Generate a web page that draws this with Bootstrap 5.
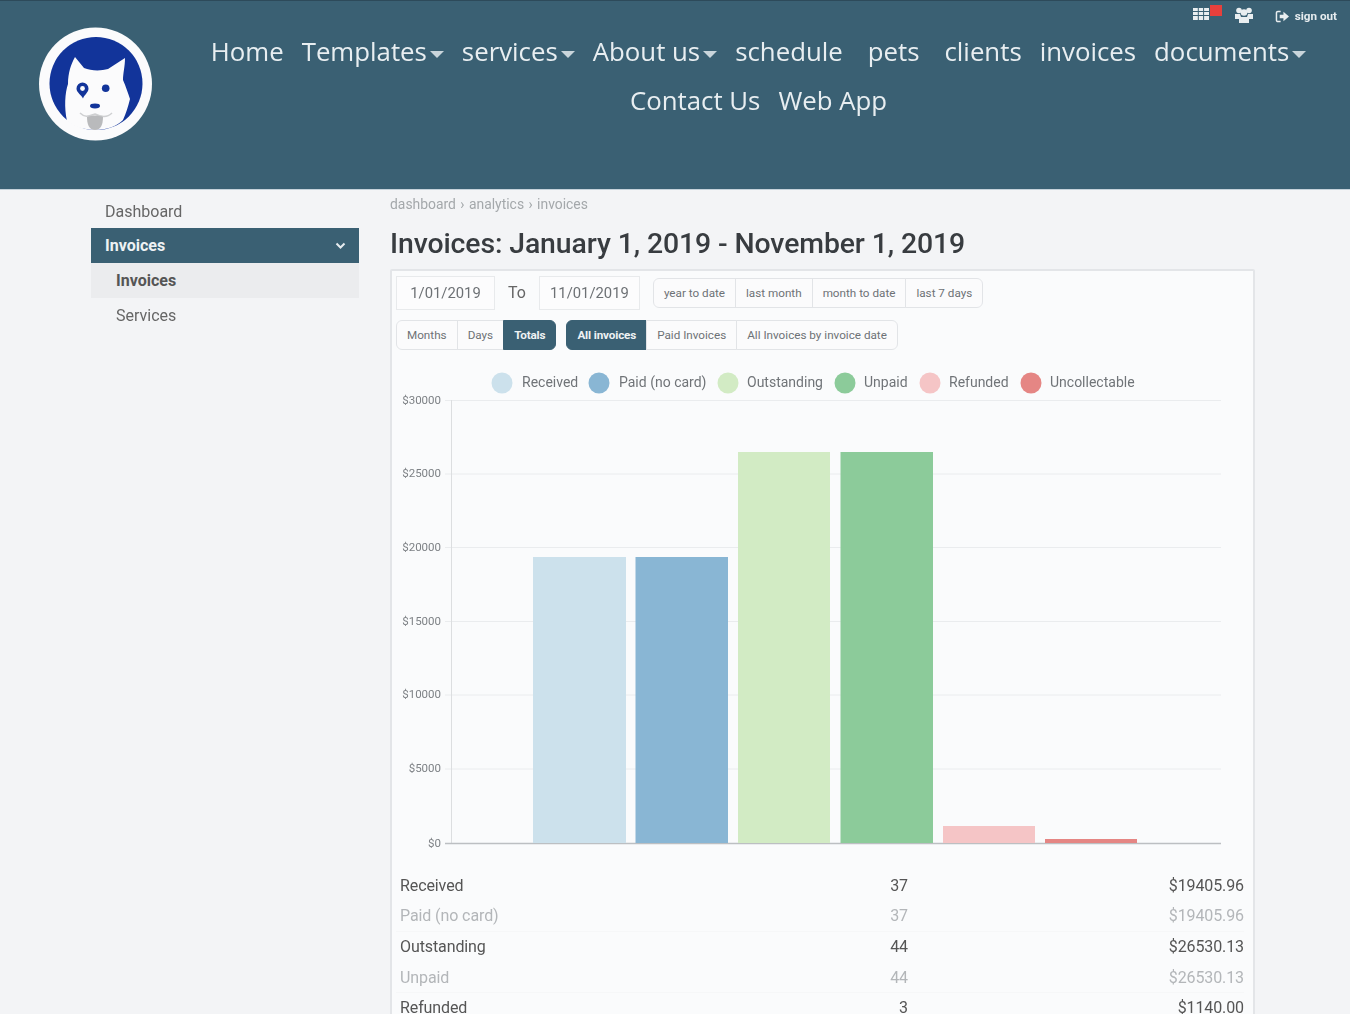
<!DOCTYPE html>
<html lang="en">
<head>
<meta charset="utf-8">
<title>Invoices</title>
<link href="https://cdn.jsdelivr.net/npm/bootstrap@5.3.0/dist/css/bootstrap.min.css" rel="stylesheet">
<style>
html,body{height:1014px;overflow:hidden}
body{background:#f3f4f6;font-family:Roboto,"Liberation Sans",sans-serif;color:#444;filter:blur(.5px)}
.top-head{background:#3a6073;height:190px;border-bottom:1px solid #c5d2da;border-top:1px solid #2d4a5a;padding:0 13px 0 39px}
.logo-wrap{width:114px;height:114px;margin-top:26px;flex:none}
.nav-area{flex:1;min-width:0;padding-left:52px}
.util-row{height:26px;font-size:11.7px;font-weight:700;color:#e6ecef;padding-top:4px}
.util-users{margin:2px 0 0 13px}
.util-out{margin:3px 0 0 22px;gap:5px}
.main-nav{width:1131px;margin-left:-12px;justify-content:center;row-gap:0}
.main-nav .nav-link{font-family:"Open Sans","Noto Sans",sans-serif;font-size:25.8px;line-height:49px;color:#e8eef1;padding:0 9px}
.main-nav .gap-l{margin-left:7px}
.caret-down{display:inline-block;width:0;height:0;border-left:7.5px solid transparent;border-right:7.5px solid transparent;border-top:7px solid #c9d5db;margin-left:3px;vertical-align:middle}
.page-body{padding-left:91px;gap:31px}
.side-col{width:268px;flex:none;font-size:16px}
.side-col .list-group-item{background:transparent;border:0;border-radius:0;padding:0 14px;height:35px;line-height:35px;color:#666}
.side-col .list-group-item.side-first{height:38px;line-height:43px}
.side-col .list-group-item.side-open{background:#3a6073;color:#eef2f4;font-weight:700;display:flex;justify-content:space-between;align-items:center;padding-right:13px}
.side-col .list-group-item.side-sub{padding-left:25px}
.side-col .list-group-item.side-cur{background:#ebecee;font-weight:700;color:#555}
.main-col{width:865px;flex:none}
.crumb-row{font-size:13.9px;color:#a4a8ab;height:28px;line-height:28px;word-spacing:1px}
.page-title{font-size:28.4px;font-weight:500;color:#383c40;margin:0;line-height:40px;height:51px;padding-top:6px;letter-spacing:-.1px}
.panel-box{background:#fafbfc;border:2px solid #e3e5e8;border-radius:2px;height:900px;padding:5px 9px 0 4px}
.date-row{gap:13px;height:34px;align-items:center}
.date-field{width:99px;height:34px;border:1px solid #e8eaec;background:#fcfcfd;text-align:center;font-size:14.8px;color:#6d7175;border-radius:0;padding:0}
.date-field-b{width:101px}
.to-word{font-size:16px;color:#666}
.chip-group .btn{background:#fbfbfc;border-color:#e2e4e7;color:#6e7276;font-size:11.7px;padding:0 10px;height:30px;line-height:28px;white-space:nowrap}
.chip-group .btn.chip-on{background:#3a6073;border-color:#3a6073;color:#eef2f4;font-weight:700;letter-spacing:-.15px}
.chip-row{gap:10px;margin-top:10px}
.chart-svg{display:block;margin-top:8px;margin-left:-4px}
.chart-svg text{font-family:Roboto,"Liberation Sans",sans-serif}
.tot-table{font-size:16px;letter-spacing:-.1px}
.tot-row{display:grid;grid-template-columns:1fr 60px 336px;height:30.7px;line-height:30.7px;padding-left:4px;color:#555}
.tot-row>div:nth-child(n+2){text-align:right}
.tot-row.tot-dim{color:#b3b6b9;border-bottom:1px solid #f6f7f8}
</style>
</head>
<body>
<header class="top-head d-flex">
  <div class="logo-wrap">
    <svg width="114" height="114" viewBox="0 0 114 114" role="img" aria-label="Logo">
      <circle cx="56.500" cy="57" r="56.500" fill="#fbfbfc"/>
      <circle cx="57" cy="56.500" r="46.500" fill="#12349a"/>
      <path d="M28 94 C25 80 26 66 29 57 C29 46 32 37 36 30 L45 41 C52 44 62 44 69 42 L86 31 C86 40 84 46 84 53 C87 60 89 66 91 72 C89 80 87 86 84 93 C72 106 42 106 28 94 Z" fill="#fbfbfc"/>
      <path d="M37.500 61.500 a6 6 0 1 1 12 0 c0 4 -4 6 -5.500 10 c-2 -4 -6.500 -6 -6.500 -10 Z" fill="#12349a"/>
      <circle cx="43.500" cy="61.500" r="2.400" fill="#fbfbfc"/>
      <circle cx="66.700" cy="61.300" r="3.800" fill="#12349a"/>
      <ellipse cx="56" cy="79" rx="5" ry="2.400" fill="#12349a"/>
      <path d="M41 86 C46 91 50 89 56 87 C62 90 68 91 73 86" fill="none" stroke="#cfd0d2" stroke-width="1.500"/>
      <path d="M48 90 C53 88 59 88 64 90 C64 97 62 103 56 103 C50 103 48 97 48 90 Z" fill="#b9babc"/>
    </svg>
  </div>
  <div class="nav-area">
    <div class="util-row d-flex justify-content-end align-items-start">
      <svg width="29" height="16" viewBox="0 0 29 16" aria-hidden="true"><path d="M0 3h16v12H0z" fill="#e9eef0"/><path d="M0 6.500h16M0 10.500h16M5.300 3v12M10.600 3v12" stroke="#3a6073"/><rect x="17" y="0" width="12" height="11" fill="#e7403c"/></svg>
      <svg class="util-users" width="18" height="16" viewBox="0 0 18 16" aria-hidden="true"><circle cx="4" cy="3.500" r="2.800" fill="#e9eef0"/><circle cx="14" cy="3.500" r="2.800" fill="#e9eef0"/><circle cx="9" cy="5.500" r="3.300" fill="#e9eef0"/><path d="M0 7h5l1 3h6l1-3h5v5h-4v4H4v-4H0z" fill="#e9eef0"/></svg>
      <span class="d-flex align-items-center util-out"><svg width="15" height="13" viewBox="0 0 16 14" aria-hidden="true"><path d="M6 1.500H3A1.500 1.500 0 0 0 1.500 3v8A1.500 1.500 0 0 0 3 12.500h3" fill="none" stroke="#e9eef0" stroke-width="1.600"/><path d="M5 5h4V2l6 5-6 5V9H5z" fill="#e9eef0"/></svg>sign out</span>
    </div>
    <nav class="nav main-nav">
      <a class="nav-link" href="#">Home</a>
      <a class="nav-link" href="#">Templates<span class="caret-down"></span></a>
      <a class="nav-link" href="#">services<span class="caret-down"></span></a>
      <a class="nav-link" href="#">About us<span class="caret-down"></span></a>
      <a class="nav-link" href="#">schedule</a>
      <a class="nav-link gap-l" href="#">pets</a>
      <a class="nav-link gap-l" href="#">clients</a>
      <a class="nav-link" href="#">invoices</a>
      <a class="nav-link" href="#">documents<span class="caret-down"></span></a>
      <a class="nav-link" href="#">Contact Us</a>
      <a class="nav-link" href="#">Web App</a>
    </nav>
  </div>
</header>
<div class="page-body d-flex">
  <aside class="side-col list-group">
    <a class="list-group-item side-first" href="#">Dashboard</a>
    <a class="list-group-item side-open" href="#">Invoices
      <svg width="11" height="8" viewBox="0 0 11 8" aria-hidden="true"><path d="M1.500 1.500l4 4 4-4" fill="none" stroke="#e6ecef" stroke-width="2"/></svg></a>
    <a class="list-group-item side-sub side-cur" href="#">Invoices</a>
    <a class="list-group-item side-sub" href="#">Services</a>
  </aside>
  <main class="main-col">
    <div class="crumb-row">dashboard › analytics › invoices</div>
    <h1 class="page-title">Invoices: January 1, 2019 - November 1, 2019</h1>
    <section class="panel-box">
      <div class="d-flex date-row">
        <input class="form-control date-field" value="1/01/2019" aria-label="From">
        <span class="to-word">To</span>
        <input class="form-control date-field date-field-b" value="11/01/2019" aria-label="To">
        <div class="btn-group chip-group">
          <a class="btn" href="#">year to date</a><a class="btn" href="#">last month</a><a class="btn" href="#">month to date</a><a class="btn" href="#">last 7 days</a>
        </div>
      </div>
      <div class="d-flex chip-row">
        <div class="btn-group chip-group">
          <a class="btn" href="#">Months</a><a class="btn" href="#">Days</a><a class="btn chip-on" href="#">Totals</a>
        </div>
        <div class="btn-group chip-group">
          <a class="btn chip-on" href="#">All invoices</a><a class="btn" href="#">Paid Invoices</a><a class="btn" href="#">All Invoices by invoice date</a>
        </div>
      </div>
      <svg class="chart-svg" width="861" height="512.500" viewBox="392 358 861 512.500" role="img" aria-label="Invoice totals chart">
        <g stroke="#eaecee">
          <path d="M445 400.500H1221M445 474H1221M445 547.500H1221M445 621.500H1221M445 695H1221M445 769H1221"/>
        </g>
        <path d="M451.500 400V843" stroke="#dcdee0"/>
        <path d="M445 843.500H1221" stroke="#bcbfc2" stroke-width="1.500"/>
        <g>
          <rect x="533" y="557" width="93" height="286" fill="#cce1ec"/>
          <rect x="635.500" y="557" width="92.500" height="286" fill="#89b6d4"/>
          <rect x="738" y="452" width="92" height="391" fill="#d2ebc4"/>
          <rect x="840.500" y="452" width="92.500" height="391" fill="#8ccb9a"/>
          <rect x="943" y="826" width="92" height="17" fill="#f5c5c6"/>
          <rect x="1045" y="839" width="92" height="4" fill="#e58684"/>
        </g>
        <g font-size="11.500" fill="#7d8185" text-anchor="end">
          <text x="441" y="404">$30000</text><text x="441" y="477">$25000</text><text x="441" y="551">$20000</text><text x="441" y="625">$15000</text><text x="441" y="698">$10000</text><text x="441" y="772">$5000</text><text x="441" y="847">$0</text>
        </g>
        <g>
          <circle cx="502" cy="383" r="10.500" fill="#cce1ec"/><circle cx="599" cy="383" r="10.500" fill="#89b6d4"/><circle cx="728" cy="383" r="10.500" fill="#d2ebc4"/><circle cx="845" cy="383" r="10.500" fill="#8ccb9a"/><circle cx="930" cy="383" r="10.500" fill="#f5c5c6"/><circle cx="1031" cy="383" r="10.500" fill="#e58684"/>
        </g>
        <g font-size="14" fill="#707478">
          <text x="522" y="387">Received</text><text x="619" y="387">Paid (no card)</text><text x="747" y="387">Outstanding</text><text x="864" y="387">Unpaid</text><text x="949" y="387">Refunded</text><text x="1050" y="387">Uncollectable</text>
        </g>
      </svg>
      <div class="tot-table">
        <div class="tot-row"><div>Received</div><div>37</div><div>$19405.96</div></div>
        <div class="tot-row tot-dim"><div>Paid (no card)</div><div>37</div><div>$19405.96</div></div>
        <div class="tot-row"><div>Outstanding</div><div>44</div><div>$26530.13</div></div>
        <div class="tot-row tot-dim"><div>Unpaid</div><div>44</div><div>$26530.13</div></div>
        <div class="tot-row"><div>Refunded</div><div>3</div><div>$1140.00</div></div>
      </div>
    </section>
  </main>
</div>
<script src="https://cdn.jsdelivr.net/npm/bootstrap@5.3.0/dist/js/bootstrap.bundle.min.js"></script>
</body>
</html>
